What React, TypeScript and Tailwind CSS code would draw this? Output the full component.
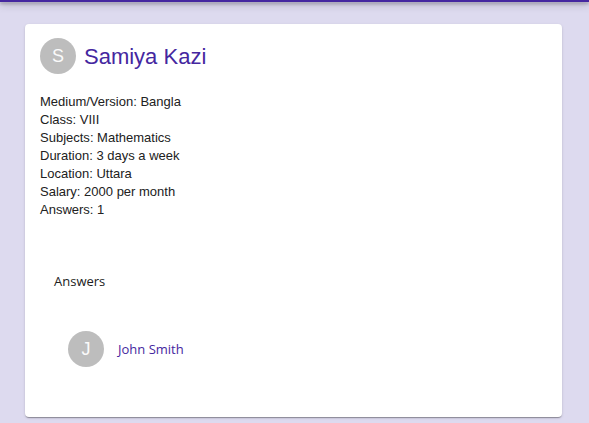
const details = [
  ["Medium/Version", "Bangla"],
  ["Class", "VIII"],
  ["Subjects", "Mathematics"],
  ["Duration", "3 days a week"],
  ["Location", "Uttara"],
  ["Salary", "2000 per month"],
  ["Answers", "1"],
];

function Avatar({ initial }: { initial: string }) {
  return (
    <span
      aria-hidden="true"
      className="flex size-9 shrink-0 items-center justify-center rounded-full bg-[#bdbdbd] text-lg text-[#fafafa]"
    >
      {initial}
    </span>
  );
}

export default function App() {
  return (
    <div className="min-h-screen bg-[#dddaef] font-['Liberation_Sans',Arial,sans-serif] text-[#212121]">
      <header className="h-0.5 bg-[#4527a0] shadow-[0_1px_8px_0_rgba(0,0,0,0.5),0_2px_3px_0_rgba(0,0,0,0.25)]" />
      <main className="pt-[22px] pr-[27px] pb-1.5 pl-[25px]">
        <article className="rounded bg-white px-[15px] pt-3.5 pb-[50px] shadow-[0_2px_1px_-1px_rgba(0,0,0,0.2),0_1px_1px_0_rgba(0,0,0,0.14),0_1px_3px_0_rgba(0,0,0,0.12)]">
          <div className="flex items-start gap-2">
            <Avatar initial="S" />
            <h1 className="text-[22px] leading-[38px] text-[#4527a0]">
              <a href="#samiya-kazi">Samiya Kazi</a>
            </h1>
          </div>
          <div className="pt-[17px] text-[13px] leading-[18px]">
            {details.map(([label, value]) => (
              <p key={label}>
                {label}: {value}
              </p>
            ))}
          </div>
          <section className="px-3.5 pt-[52px]">
            <h2 className="font-['Open_Sans','Noto_Sans',sans-serif] text-[13px] leading-5">Answers</h2>
            <div className="flex items-center gap-3.5 px-3.5 pt-10">
              <Avatar initial="J" />
              <a
                href="#john-smith"
                className="font-['Open_Sans','Noto_Sans',sans-serif] text-[13px] leading-5 text-[#4527a0]"
              >
                John Smith
              </a>
            </div>
          </section>
        </article>
      </main>
    </div>
  );
}
